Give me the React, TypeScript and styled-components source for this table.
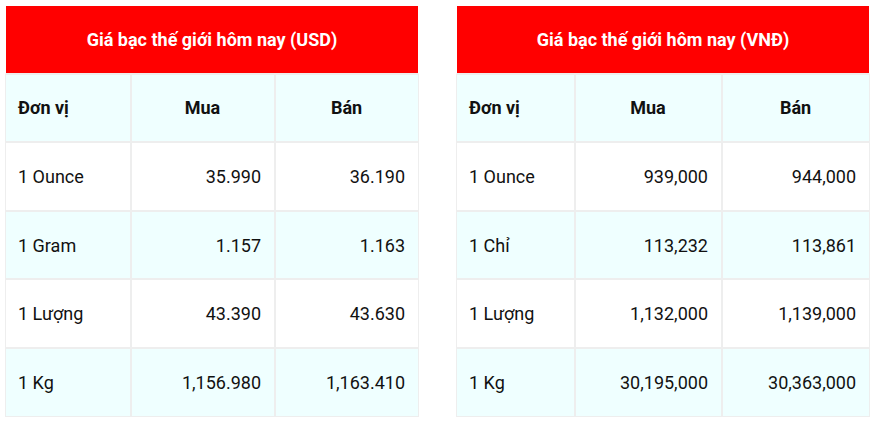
import React from "react";
import styled, { createGlobalStyle } from "styled-components";

const GlobalStyle = createGlobalStyle`
  html, body { margin: 0; padding: 0; background: #ffffff; }
  body { font-family: Roboto, "Liberation Sans", Arial, sans-serif; color: #111; }
`;

const Page = styled.div`
  display: flex;
  gap: 37px;
  padding: 5px 0 0 5px;
`;

const Table = styled.table`
  width: 414px;
  border-collapse: separate;
  border-spacing: 0;
  table-layout: fixed;
  font-family: Roboto, "Liberation Sans", Arial, sans-serif;
`;

const TitleCell = styled.th`
  background: #ff0000;
  color: #ffffff;
  font-size: 18px;
  font-weight: 700;
  text-align: center;
  height: 66.6px;
  padding: 0;
  border: 1px solid #ffffff;
  border-bottom-color: #eeeeee;
`;

const Row = styled.tr<{ $tint: boolean }>`
  background: ${(p) => (p.$tint ? "#efffff" : "#ffffff")};
`;

const Cell = styled.td<{ $align: "left" | "center" | "right"; $bold?: boolean }>`
  height: 66.6px;
  padding: 0 13px 0 12px;
  border: 1px solid #eeeeee;
  font-size: 18px;
  font-weight: ${(p) => (p.$bold ? 700 : 400)};
  text-align: ${(p) => p.$align};
  vertical-align: middle;
  color: #111;
  white-space: nowrap;
`;

type TableData = {
  title: string;
  widths: [number, number, number];
  rows: [string, string, string][];
};

const tables: TableData[] = [
  {
    title: "Giá bạc thế giới hôm nay (USD)",
    widths: [126, 144, 144],
    rows: [
      ["1 Ounce", "35.990", "36.190"],
      ["1 Gram", "1.157", "1.163"],
      ["1 Lượng", "43.390", "43.630"],
      ["1 Kg", "1,156.980", "1,163.410"],
    ],
  },
  {
    title: "Giá bạc thế giới hôm nay (VNĐ)",
    widths: [119, 147, 148],
    rows: [
      ["1 Ounce", "939,000", "944,000"],
      ["1 Chỉ", "113,232", "113,861"],
      ["1 Lượng", "1,132,000", "1,139,000"],
      ["1 Kg", "30,195,000", "30,363,000"],
    ],
  },
];

function PriceTable({ data }: { data: TableData }) {
  return (
    <Table>
      <colgroup>
        {data.widths.map((w, i) => (
          <col key={i} style={{ width: w }} />
        ))}
      </colgroup>
      <thead>
        <tr>
          <TitleCell colSpan={3}>{data.title}</TitleCell>
        </tr>
      </thead>
      <tbody>
        <Row $tint={true}>
          <Cell $align="left" $bold>Đơn vị</Cell>
          <Cell $align="center" $bold>Mua</Cell>
          <Cell $align="center" $bold>Bán</Cell>
        </Row>
        {data.rows.map((r, i) => (
          <Row key={i} $tint={i % 2 === 1}>
            <Cell $align="left">{r[0]}</Cell>
            <Cell $align="right">{r[1]}</Cell>
            <Cell $align="right">{r[2]}</Cell>
          </Row>
        ))}
      </tbody>
    </Table>
  );
}

export default function App() {
  return (
    <>
      <GlobalStyle />
      <Page>
        {tables.map((t) => (
          <PriceTable key={t.title} data={t} />
        ))}
      </Page>
    </>
  );
}
